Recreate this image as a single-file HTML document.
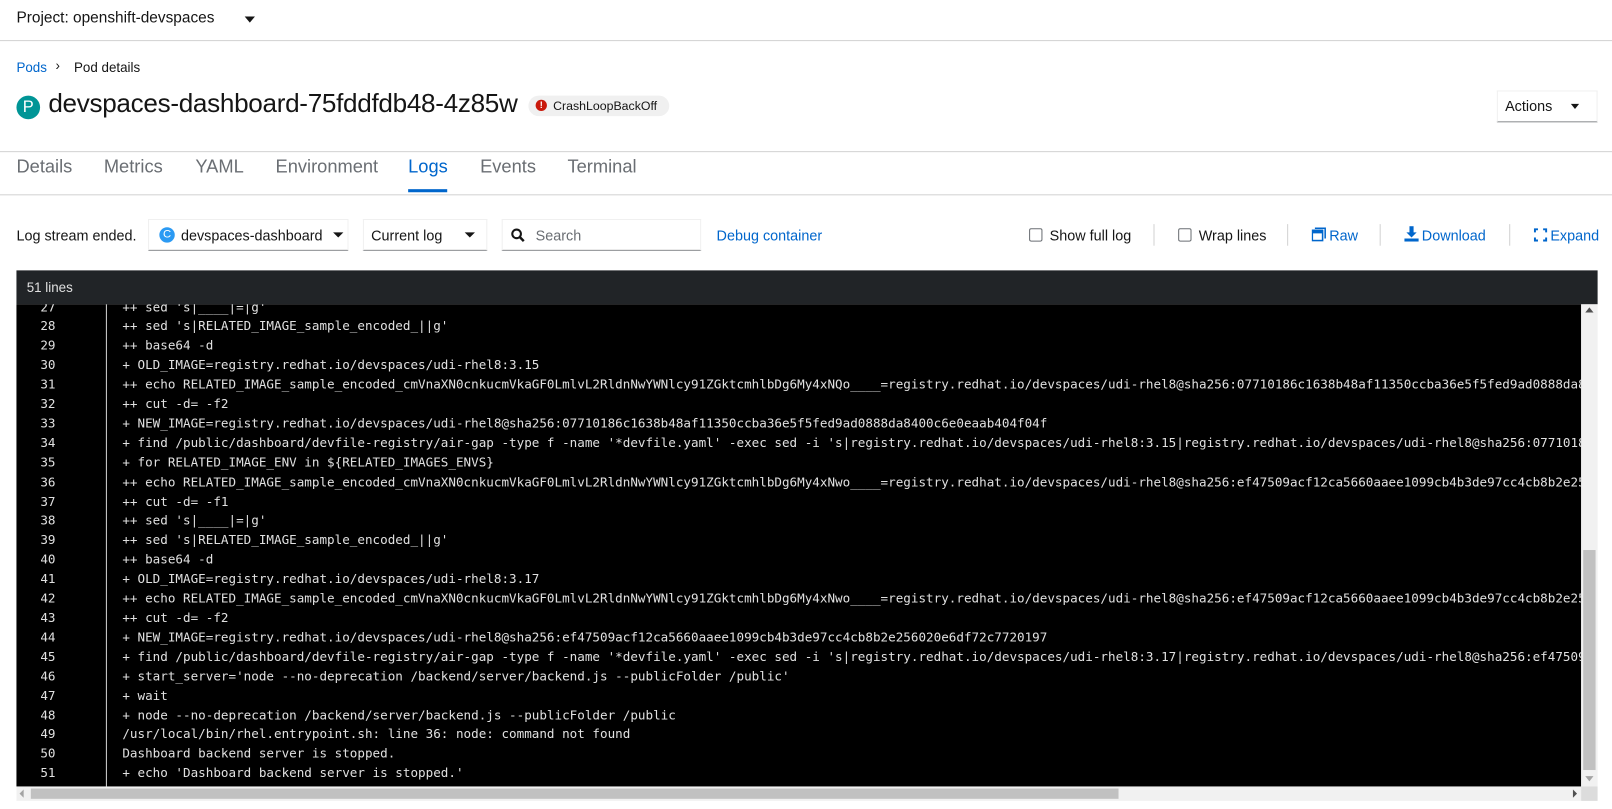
<!DOCTYPE html>
<html><head><meta charset="utf-8"><style>
*{box-sizing:border-box;margin:0;padding:0}
body{width:1612px;height:809px;overflow:hidden;background:#fff;font-family:"Liberation Sans",sans-serif;color:#151515;position:relative}
#wrap{position:absolute;left:0;top:0;width:1568px;height:787px;transform:scale(1.02806);transform-origin:0 0}
.abs{position:absolute}
.caret{display:inline-block;width:0;height:0;border-left:5px solid transparent;border-right:5px solid transparent;border-top:6px solid #151515}
.hr{position:absolute;left:0;width:1568px;height:1px;background:#d2d2d2}
.tab{position:absolute;top:152px;font-size:17.8px;color:#6a6e73}
.sel{position:absolute;top:213px;height:31px;border:1px solid #f0f0f0;border-bottom:1px solid #8a8d90;font-size:14px;display:flex;align-items:center}
.link{color:#0066cc;font-size:14px}
.cb{position:absolute;top:222px;width:13px;height:13px;border:1px solid #6a6e73;border-radius:2px}
.sep{position:absolute;top:218px;width:1px;height:21px;background:#d2d2d2}
#log{position:absolute;left:16px;top:296px;width:1522px;height:469px;background:#000;overflow:hidden}
#inner{position:absolute;left:0;top:-6.5px;font-family:"DejaVu Sans Mono",monospace;font-size:12.25px;line-height:18.91px;color:#e0e0e0}
.row{display:flex;height:18.91px;white-space:pre}
.n{width:38px;text-align:right;flex:none}
.t{padding-left:65px}
</style></head><body><div id="wrap">
<div class="abs" style="left:16px;top:9px;font-size:15px">Project: openshift-devspaces</div>
<div class="abs caret" style="left:238px;top:16px"></div>
<div class="hr" style="top:39px"></div>
<div class="abs link" style="left:16px;top:58px;font-size:13px">Pods</div>
<div class="abs" style="left:54px;top:56px;font-size:13px">›</div>
<div class="abs" style="left:72px;top:58px;font-size:13px">Pod details</div>
<div class="abs" style="left:16px;top:93px;width:23px;height:23px;border-radius:50%;background:#009596;color:#fff;font-size:16px;text-align:center;line-height:23px">P</div>
<div class="abs" style="left:47px;top:87px;font-size:25.4px;letter-spacing:-0.3px">devspaces-dashboard-75fddfdb48-4z85w</div>
<div class="abs" style="left:514px;top:93px;width:137px;height:20px;border-radius:10px;background:#f0f0f0;font-size:12px;line-height:20px;padding-left:24px">CrashLoopBackOff</div>
<div class="abs" style="left:521px;top:97px;width:11px;height:11px;border-radius:50%;background:#c9190b;color:#fff;font-size:9px;font-weight:bold;text-align:center;line-height:11px">!</div>
<div class="abs" style="left:1456px;top:88px;width:98px;height:31px;border:1px solid #f0f0f0;border-bottom:1px solid #8a8d90;font-size:14px;line-height:29px;padding-left:7px">Actions<span class="caret" style="position:absolute;left:71px;top:12px;border-top-width:5px;border-left-width:4.5px;border-right-width:4.5px"></span></div>
<div class="hr" style="top:147px"></div>
<div class="tab" style="left:16px">Details</div>
<div class="tab" style="left:101px">Metrics</div>
<div class="tab" style="left:190px">YAML</div>
<div class="tab" style="left:268px">Environment</div>
<div class="tab" style="left:397px;color:#0066cc">Logs</div>
<div class="abs" style="left:397px;top:184px;width:38px;height:3px;background:#0066cc"></div>
<div class="tab" style="left:467px">Events</div>
<div class="tab" style="left:552px">Terminal</div>
<div class="hr" style="top:189px"></div>
<div class="abs" style="left:16px;top:221px;font-size:14px">Log stream ended.</div>
<div class="sel" style="left:144px;width:195px"><span style="display:inline-block;width:15px;height:15px;border-radius:50%;background:#2b9af3;color:#fff;font-size:11px;text-align:center;line-height:15px;margin:0 6px 0 10px">C</span>devspaces-dashboard<span class="caret" style="margin-left:10px;border-top-width:5px"></span></div>
<div class="sel" style="left:353px;width:121px;padding-left:7px">Current log<span class="caret" style="margin-left:22px;border-top-width:5px"></span></div>
<div class="sel" style="left:488px;width:194px;padding-left:8px"><svg width="14" height="14" viewBox="0 0 14 14"><circle cx="5.5" cy="5.5" r="4.2" fill="none" stroke="#151515" stroke-width="2"/><path d="M8.5 8.5L12.5 12.5" stroke="#151515" stroke-width="2.4"/></svg><span style="color:#6a6e73;margin-left:10px">Search</span></div>
<div class="abs link" style="left:697px;top:221px">Debug container</div>
<div class="cb" style="left:1001px"></div>
<div class="abs" style="left:1021px;top:221px;font-size:14px">Show full log</div>
<div class="sep" style="left:1122px"></div>
<div class="cb" style="left:1146px"></div>
<div class="abs" style="left:1166px;top:221px;font-size:14px">Wrap lines</div>
<div class="sep" style="left:1252px"></div>
<svg class="abs" style="left:1276px;top:221px" width="14" height="14" viewBox="0 0 14 14"><rect x="0.5" y="3" width="10" height="10" fill="none" stroke="#0066cc" stroke-width="1.5"/><rect x="0.5" y="3" width="10" height="3" fill="#0066cc"/><path d="M3 1H13V11" fill="none" stroke="#0066cc" stroke-width="1.5"/></svg>
<div class="abs link" style="left:1293px;top:221px">Raw</div>
<div class="sep" style="left:1342px"></div>
<svg class="abs" style="left:1366px;top:220px" width="14" height="15" viewBox="0 0 14 15"><path d="M5 0H9V6H12L7 11L2 6H5Z" fill="#0066cc"/><rect x="0" y="12" width="14" height="3" fill="#0066cc"/></svg>
<div class="abs link" style="left:1383px;top:221px">Download</div>
<div class="sep" style="left:1468px"></div>
<svg class="abs" style="left:1492px;top:222px" width="13" height="13" viewBox="0 0 13 13" fill="none" stroke="#0066cc" stroke-width="2"><path d="M1 4V1H4M9 1H12V4M12 9V12H9M4 12H1V9"/></svg>
<div class="abs link" style="left:1508px;top:221px">Expand</div>
<div class="abs" style="left:16px;top:263px;width:1538px;height:33px;background:#212427;color:#e0e0e0;font-size:13px;line-height:33px;padding-left:10px">51 lines</div>
<div id="log"><div class="abs" style="left:87px;top:0;width:1px;height:469px;background:#d2d2d2"></div><div id="inner"><div class="row"><span class="n">27</span><span class="t">++ sed 's|____|=|g'</span></div><div class="row"><span class="n">28</span><span class="t">++ sed 's|RELATED_IMAGE_sample_encoded_||g'</span></div><div class="row"><span class="n">29</span><span class="t">++ base64 -d</span></div><div class="row"><span class="n">30</span><span class="t">+ OLD_IMAGE=registry.redhat.io/devspaces/udi-rhel8:3.15</span></div><div class="row"><span class="n">31</span><span class="t">++ echo RELATED_IMAGE_sample_encoded_cmVnaXN0cnkucmVkaGF0LmlvL2RldnNwYWNlcy91ZGktcmhlbDg6My4xNQo____=registry.redhat.io/devspaces/udi-rhel8@sha256:07710186c1638b48af11350ccba36e5f5fed9ad0888da8400c6e0eaab404f04f</span></div><div class="row"><span class="n">32</span><span class="t">++ cut -d= -f2</span></div><div class="row"><span class="n">33</span><span class="t">+ NEW_IMAGE=registry.redhat.io/devspaces/udi-rhel8@sha256:07710186c1638b48af11350ccba36e5f5fed9ad0888da8400c6e0eaab404f04f</span></div><div class="row"><span class="n">34</span><span class="t">+ find /public/dashboard/devfile-registry/air-gap -type f -name '*devfile.yaml' -exec sed -i 's|registry.redhat.io/devspaces/udi-rhel8:3.15|registry.redhat.io/devspaces/udi-rhel8@sha256:07710186c1638b48</span></div><div class="row"><span class="n">35</span><span class="t">+ for RELATED_IMAGE_ENV in ${RELATED_IMAGES_ENVS}</span></div><div class="row"><span class="n">36</span><span class="t">++ echo RELATED_IMAGE_sample_encoded_cmVnaXN0cnkucmVkaGF0LmlvL2RldnNwYWNlcy91ZGktcmhlbDg6My4xNwo____=registry.redhat.io/devspaces/udi-rhel8@sha256:ef47509acf12ca5660aaee1099cb4b3de97cc4cb8b2e256020e6df72c7720197</span></div><div class="row"><span class="n">37</span><span class="t">++ cut -d= -f1</span></div><div class="row"><span class="n">38</span><span class="t">++ sed 's|____|=|g'</span></div><div class="row"><span class="n">39</span><span class="t">++ sed 's|RELATED_IMAGE_sample_encoded_||g'</span></div><div class="row"><span class="n">40</span><span class="t">++ base64 -d</span></div><div class="row"><span class="n">41</span><span class="t">+ OLD_IMAGE=registry.redhat.io/devspaces/udi-rhel8:3.17</span></div><div class="row"><span class="n">42</span><span class="t">++ echo RELATED_IMAGE_sample_encoded_cmVnaXN0cnkucmVkaGF0LmlvL2RldnNwYWNlcy91ZGktcmhlbDg6My4xNwo____=registry.redhat.io/devspaces/udi-rhel8@sha256:ef47509acf12ca5660aaee1099cb4b3de97cc4cb8b2e256020e6df72c7720197</span></div><div class="row"><span class="n">43</span><span class="t">++ cut -d= -f2</span></div><div class="row"><span class="n">44</span><span class="t">+ NEW_IMAGE=registry.redhat.io/devspaces/udi-rhel8@sha256:ef47509acf12ca5660aaee1099cb4b3de97cc4cb8b2e256020e6df72c7720197</span></div><div class="row"><span class="n">45</span><span class="t">+ find /public/dashboard/devfile-registry/air-gap -type f -name '*devfile.yaml' -exec sed -i 's|registry.redhat.io/devspaces/udi-rhel8:3.17|registry.redhat.io/devspaces/udi-rhel8@sha256:ef47509acf12ca56</span></div><div class="row"><span class="n">46</span><span class="t">+ start_server='node --no-deprecation /backend/server/backend.js --publicFolder /public'</span></div><div class="row"><span class="n">47</span><span class="t">+ wait</span></div><div class="row"><span class="n">48</span><span class="t">+ node --no-deprecation /backend/server/backend.js --publicFolder /public</span></div><div class="row"><span class="n">49</span><span class="t">/usr/local/bin/rhel.entrypoint.sh: line 36: node: command not found</span></div><div class="row"><span class="n">50</span><span class="t">Dashboard backend server is stopped.</span></div><div class="row"><span class="n">51</span><span class="t">+ echo 'Dashboard backend server is stopped.'</span></div></div></div>
<div class="abs" style="left:1538px;top:296px;width:16px;height:469px;background:#f1f1f1"></div>
<div class="abs" style="left:1540px;top:535px;width:12px;height:214px;background:#c1c1c1"></div>
<div class="abs" style="left:1542px;top:299px;width:0;height:0;border-left:4px solid transparent;border-right:4px solid transparent;border-bottom:5px solid #505050"></div>
<div class="abs" style="left:1542px;top:755px;width:0;height:0;border-left:4px solid transparent;border-right:4px solid transparent;border-top:5px solid #a3a3a3"></div>
<div class="abs" style="left:16px;top:765px;width:1522px;height:14px;background:#f1f1f1"></div>
<div class="abs" style="left:30px;top:767px;width:1058px;height:10px;background:#c1c1c1"></div>
<div class="abs" style="left:19px;top:768px;width:0;height:0;border-top:4px solid transparent;border-bottom:4px solid transparent;border-right:4px solid #a3a3a3"></div>
<div class="abs" style="left:1530px;top:768px;width:0;height:0;border-top:4px solid transparent;border-bottom:4px solid transparent;border-left:4px solid #505050"></div>
<div class="abs" style="left:1538px;top:765px;width:16px;height:14px;background:#dcdcdc"></div>
</div></body></html>
